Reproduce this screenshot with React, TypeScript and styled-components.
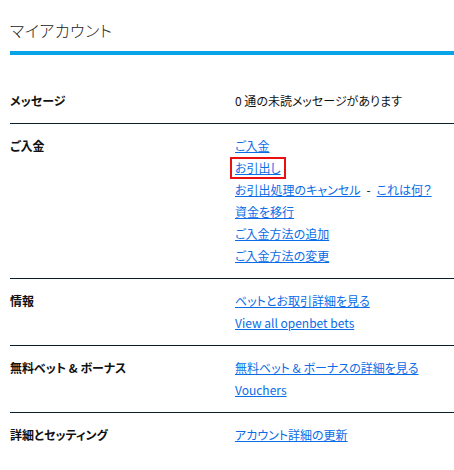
import React from "react";
import styled, { createGlobalStyle } from "styled-components";

const Global = createGlobalStyle`
  html, body { margin: 0; padding: 0; background: #fff; }
  body {
    font-family: "Noto Sans CJK JP", "Noto Sans", sans-serif;
    color: #111;
    font-feature-settings: "palt";
  }
`;

const Page = styled.div`
  padding-left: 10px;
`;

const Title = styled.h1`
  margin: 0 0 24px;
  padding: 20px 0 11px;
  font-size: 16px;
  line-height: 20px;
  font-weight: 300;
  letter-spacing: 0.5px;
  color: #1a1a1a;
  border-bottom: 4px solid #0aa3e8;
`;

const Row = styled.section<{ $last?: boolean }>`
  display: grid;
  grid-template-columns: 225px 1fr;
  padding: 11px 0;
  border-bottom: ${(p) => (p.$last ? "none" : "1px solid #0d1e2b")};
  font-size: 12px;
  line-height: 22px;
`;

const Label = styled.div`
  font-weight: 700;
  color: #111;
`;

const Items = styled.div`
  display: flex;
  flex-direction: column;
`;

const Line = styled.div`
  white-space: nowrap;
`;

const Link = styled.a<{ $boxed?: boolean }>`
  color: #0a6ce6;
  text-decoration: underline;
  cursor: pointer;
  ${(p) =>
    p.$boxed
      ? `display: inline-block; line-height: 18px; border: 2px solid #e81010; padding: 0 3px; margin-left: -5px;`
      : ""}
`;

const Sep = styled.span`
  color: #111;
  margin: 0 6px;
`;

const Plain = styled.span`
  color: #111;
`;

export default function App() {
  return (
    <Page>
      <Global />
      <Title>マイアカウント</Title>
      <Row>
        <Label>メッセージ</Label>
        <Items>
          <Line>
            <Plain>0 通の未読メッセージがあります</Plain>
          </Line>
        </Items>
      </Row>
      <Row>
        <Label>ご入金</Label>
        <Items>
          <Line><Link>ご入金</Link></Line>
          <Line><Link $boxed>お引出し</Link></Line>
          <Line>
            <Link>お引出処理のキャンセル</Link>
            <Sep>-</Sep>
            <Link>これは何？</Link>
          </Line>
          <Line><Link>資金を移行</Link></Line>
          <Line><Link>ご入金方法の追加</Link></Line>
          <Line><Link>ご入金方法の変更</Link></Line>
        </Items>
      </Row>
      <Row>
        <Label>情報</Label>
        <Items>
          <Line><Link>ベットとお取引詳細を見る</Link></Line>
          <Line><Link>View all openbet bets</Link></Line>
        </Items>
      </Row>
      <Row>
        <Label>無料ベット & ボーナス</Label>
        <Items>
          <Line><Link>無料ベット & ボーナスの詳細を見る</Link></Line>
          <Line><Link>Vouchers</Link></Line>
        </Items>
      </Row>
      <Row $last>
        <Label>詳細とセッティング</Label>
        <Items>
          <Line><Link>アカウント詳細の更新</Link></Line>
        </Items>
      </Row>
    </Page>
  );
}
